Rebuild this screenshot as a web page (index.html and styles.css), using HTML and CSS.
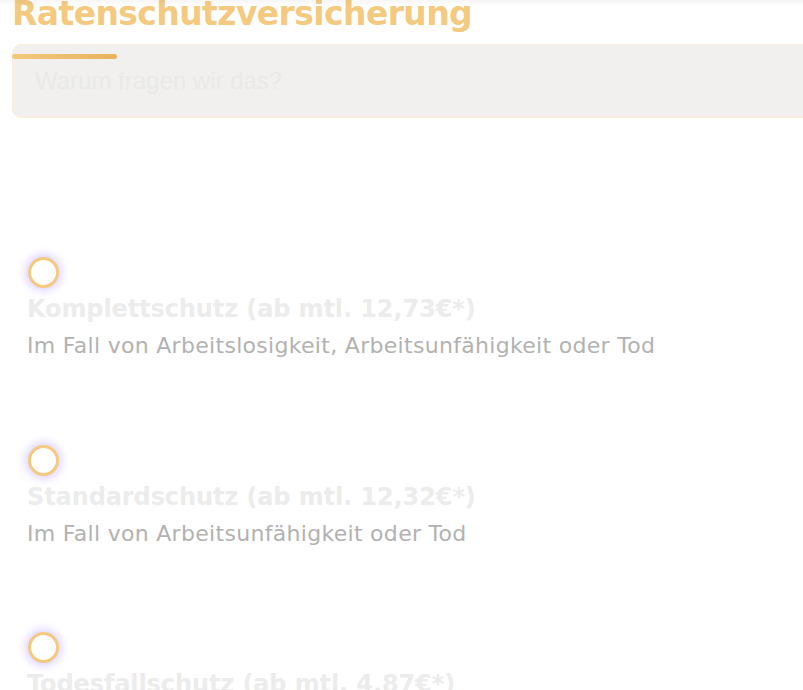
FILE: index.html
```html
<!DOCTYPE html>
<html lang="de">
<head>
<meta charset="utf-8">
<link rel="stylesheet" href="styles.css">
</head>
<body>
<div class="topshadow"></div>
<main class="page">
  <h1 class="title">Ratenschutzversicherung</h1>
  <div class="why">
    <div class="why-bar"></div>
    <div class="why-text">Warum fragen wir das?</div>
  </div>
  <div class="options">
    <label class="option">
      <span class="radio"></span>
      <span class="opt-title">Komplettschutz (ab mtl. 12,73€*)</span>
      <span class="opt-sub">Im Fall von Arbeitslosigkeit, Arbeitsunfähigkeit oder Tod</span>
    </label>
    <label class="option">
      <span class="radio"></span>
      <span class="opt-title">Standardschutz (ab mtl. 12,32€*)</span>
      <span class="opt-sub">Im Fall von Arbeitsunfähigkeit oder Tod</span>
    </label>
    <label class="option">
      <span class="radio"></span>
      <span class="opt-title">Todesfallschutz (ab mtl. 4,87€*)</span>
      <span class="opt-sub">Im Fall von Tod</span>
    </label>
  </div>
</main>
</body>
</html>
```
FILE: styles.css
```css
html, body {
  margin: 0;
  padding: 0;
  background: #ffffff;
  overflow: hidden;
}
body {
  width: 803px;
  height: 690px;
  font-family: "DejaVu Sans", "Open Sans", sans-serif;
}
.topshadow {
  position: fixed;
  top: 0;
  left: 0;
  right: 0;
  height: 6px;
  background: linear-gradient(to bottom, rgba(0,0,0,0.035), rgba(0,0,0,0));
  z-index: 2;
}
.page {
  padding-left: 12px;
}
.title {
  margin: 0;
  margin-top: -8px;
  font-size: 33px;
  line-height: 44px;
  font-weight: 700;
  color: #f3ca7f;
  letter-spacing: -0.6px;
}
.why {
  margin-top: 8px;
  width: 820px;
  height: 72px;
  box-sizing: content-box;
  background: #f1f0ee;
  border: 1px solid #fcefd9;
  border-radius: 9px;
  display: flex;
  flex-direction: column;
}
.why-bar {
  margin-top: 9px;
  margin-left: -1px;
  width: 105px;
  height: 5px;
  border-radius: 3px;
  background: linear-gradient(to right, #f2c87c, #e7b45c);
}
.why-text {
  margin-left: 22px;
  margin-top: 6px;
  font-family: "Liberation Sans", Arial, sans-serif;
  font-size: 24px;
  line-height: 32px;
  color: #e9e9e7;
}
.options {
  display: flex;
  flex-direction: column;
  gap: 0;
  margin-top: 139px;
  padding-left: 15px;
}
.option {
  display: flex;
  flex-direction: column;
  align-items: flex-start;
  height: 187.5px;
}
.radio {
  width: 25px;
  height: 25px;
  border: 3px solid #f3ca7f;
  border-radius: 50%;
  background: #ffffff;
  box-shadow: 0 0 9px 3px rgba(150, 110, 255, 0.3);
  margin-left: 1px;
}
.opt-title {
  margin-top: 4px;
  font-size: 24px;
  line-height: 34px;
  font-weight: 700;
  color: #ececec;
  letter-spacing: -0.1px;
}
.opt-sub {
  margin-top: 5px;
  font-size: 22px;
  line-height: 30px;
  color: #b2b2b2;
  letter-spacing: 0.3px;
}
```
